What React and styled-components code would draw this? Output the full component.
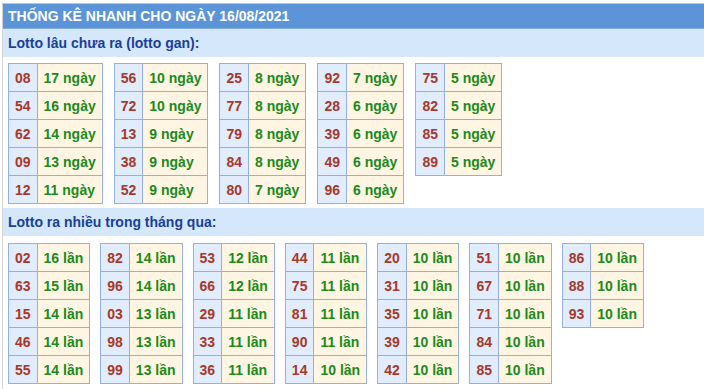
import React from "react";
import styled, { createGlobalStyle } from "styled-components";

const GlobalStyle = createGlobalStyle`
  html, body {
    margin: 0;
    padding: 0;
    background: #ffffff;
    font-family: "Liberation Sans", Arial, sans-serif;
  }
`;

const ganData = [
  [["08", "17"], ["54", "16"], ["62", "14"], ["09", "13"], ["12", "11"]],
  [["56", "10"], ["72", "10"], ["13", "9"], ["38", "9"], ["52", "9"]],
  [["25", "8"], ["77", "8"], ["79", "8"], ["84", "8"], ["80", "7"]],
  [["92", "7"], ["28", "6"], ["39", "6"], ["49", "6"], ["96", "6"]],
  [["75", "5"], ["82", "5"], ["85", "5"], ["89", "5"]],
];

const nhieuData = [
  [["02", "16"], ["63", "15"], ["15", "14"], ["46", "14"], ["55", "14"]],
  [["82", "14"], ["96", "14"], ["03", "13"], ["98", "13"], ["99", "13"]],
  [["53", "12"], ["66", "12"], ["29", "11"], ["33", "11"], ["36", "11"]],
  [["44", "11"], ["75", "11"], ["81", "11"], ["90", "11"], ["14", "10"]],
  [["20", "10"], ["31", "10"], ["35", "10"], ["39", "10"], ["42", "10"]],
  [["51", "10"], ["67", "10"], ["71", "10"], ["84", "10"], ["85", "10"]],
  [["86", "10"], ["88", "10"], ["93", "10"]],
];

const StatBox = () => {
  return (
    <Box>
      <Header>THỐNG KÊ NHANH CHO NGÀY 16/08/2021</Header>
      <SectionTitle>Lotto lâu chưa ra (lotto gan):</SectionTitle>
      <TableRow>
        {ganData.map((group, i) => (
          <LottoTable key={i}>
            <tbody>
              {group.map(([num, count]) => (
                <tr key={num}>
                  <NumCell>{num}</NumCell>
                  <ValueCell>{count} ngày</ValueCell>
                </tr>
              ))}
            </tbody>
          </LottoTable>
        ))}
      </TableRow>
      <SectionTitle>Lotto ra nhiều trong tháng qua:</SectionTitle>
      <TableRow $top={7} $gap={10}>
        {nhieuData.map((group, i) => (
          <LottoTable key={i}>
            <tbody>
              {group.map(([num, count]) => (
                <tr key={num}>
                  <NumCell>{num}</NumCell>
                  <ValueCell>{count} lần</ValueCell>
                </tr>
              ))}
            </tbody>
          </LottoTable>
        ))}
      </TableRow>
    </Box>
  );
};

export default function App() {
  return (
    <>
      <GlobalStyle />
      <StatBox />
    </>
  );
}

const Box = styled.div`
  margin: 3px 0 0 2px;
  border-top: 1px solid #b9c4d2;
  border-left: 1px solid #d4d4d4;
  display: flex;
  flex-direction: column;
  min-height: 386px;
  box-sizing: border-box;
`;

const Header = styled.div`
  height: 24px;
  line-height: 24px;
  padding-left: 5px;
  background: #5b94d7;
  border-bottom: 1px solid #7fabe2;
  color: #ffffff;
  font-size: 14px;
  font-weight: bold;
  white-space: nowrap;
`;

const SectionTitle = styled.div`
  height: 28px;
  line-height: 28px;
  padding-left: 5px;
  background: #d5e7fb;
  color: #1b3f96;
  font-size: 14px;
  font-weight: bold;
  white-space: nowrap;
`;

const TableRow = styled.div`
  display: flex;
  align-items: flex-start;
  gap: ${(p) => p.$gap || 11}px;
  padding: ${(p) => p.$top || 6}px 0 4px 5px;
`;

const LottoTable = styled.table`
  border-collapse: collapse;
  border: 1px solid #92b1e2;
  font-size: 14px;
  font-weight: bold;

  td {
    border: 1px solid #92b1e2;
    height: 28px;
    padding: 0 6px;
    box-sizing: border-box;
    white-space: nowrap;
  }
`;

const NumCell = styled.td`
  background: #e1ecfc;
  color: #a6392b;
  text-align: center;
`;

const ValueCell = styled.td`
  background: #fff5e3;
  color: #1c8a1c;
`;
